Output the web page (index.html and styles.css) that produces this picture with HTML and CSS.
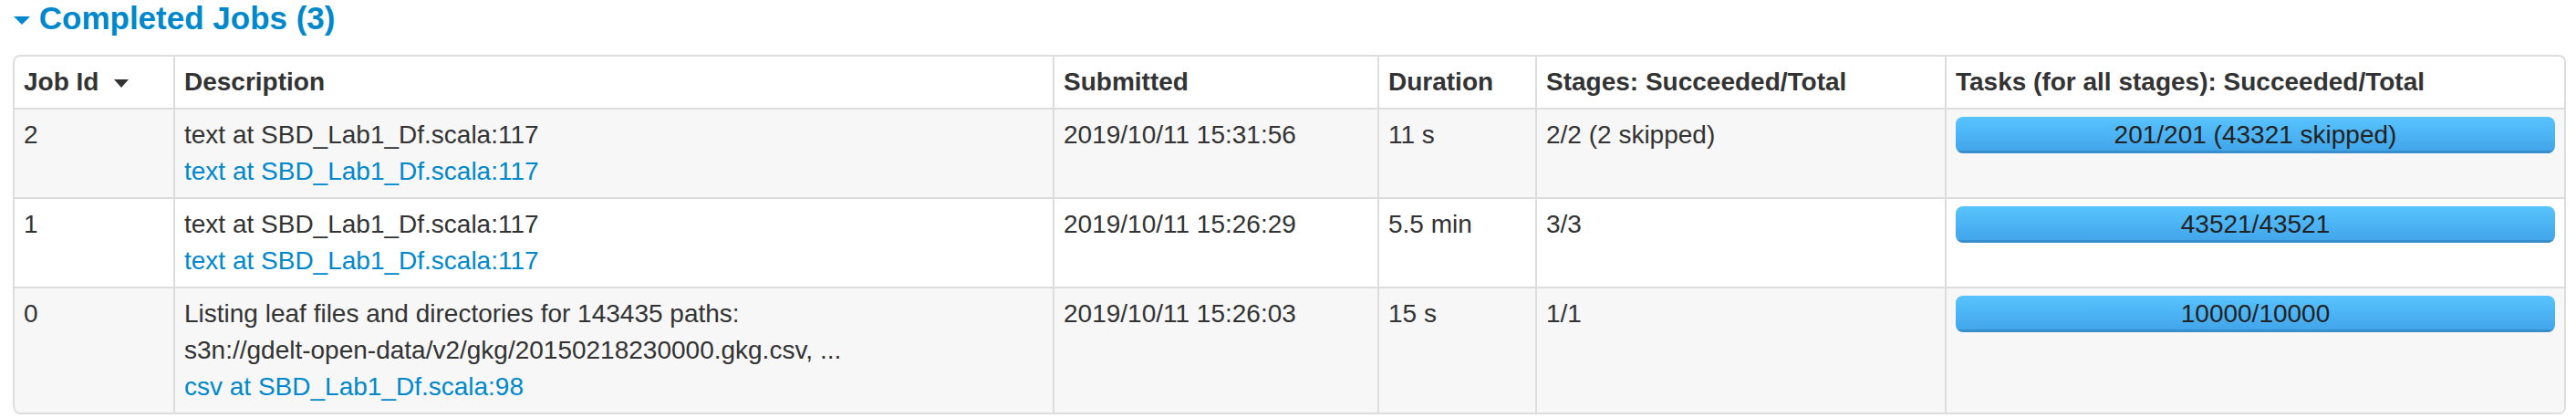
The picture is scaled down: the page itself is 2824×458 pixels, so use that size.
FILE: index.html
```html
<!DOCTYPE html>
<html>
<head>
<meta charset="utf-8">
<title>Completed Jobs</title>
<link rel="stylesheet" href="styles.css">
</head>
<body>
<div class="page">
  <h4 class="section-title"><span class="arrow-open"></span> <a class="title-link">Completed Jobs (3)</a></h4>
  <table class="jobs">
    <thead>
      <tr>
        <th class="c-id">Job Id<span class="sort-arrow"></span></th>
        <th class="c-desc">Description</th>
        <th class="c-sub">Submitted</th>
        <th class="c-dur">Duration</th>
        <th class="c-stages">Stages: Succeeded/Total</th>
        <th class="c-tasks">Tasks (for all stages): Succeeded/Total</th>
      </tr>
    </thead>
    <tbody>
      <tr class="odd">
        <td>2</td>
        <td><span class="desc">text at SBD_Lab1_Df.scala:117</span><a class="name-link">text at SBD_Lab1_Df.scala:117</a></td>
        <td>2019/10/11 15:31:56</td>
        <td>11 s</td>
        <td>2/2 (2 skipped)</td>
        <td><div class="progress"><div class="bar"></div><span class="progress-label">201/201 (43321 skipped)</span></div></td>
      </tr>
      <tr>
        <td>1</td>
        <td><span class="desc">text at SBD_Lab1_Df.scala:117</span><a class="name-link">text at SBD_Lab1_Df.scala:117</a></td>
        <td>2019/10/11 15:26:29</td>
        <td>5.5 min</td>
        <td>3/3</td>
        <td><div class="progress"><div class="bar"></div><span class="progress-label">43521/43521</span></div></td>
      </tr>
      <tr class="odd last">
        <td>0</td>
        <td><span class="desc">Listing leaf files and directories for 143435 paths:<br>s3n://gdelt-open-data/v2/gkg/20150218230000.gkg.csv, ...</span><a class="name-link">csv at SBD_Lab1_Df.scala:98</a></td>
        <td>2019/10/11 15:26:03</td>
        <td>15 s</td>
        <td>1/1</td>
        <td><div class="progress"><div class="bar"></div><span class="progress-label">10000/10000</span></div></td>
      </tr>
    </tbody>
  </table>
</div>
</body>
</html>
```
FILE: styles.css
```css
html, body {
  margin: 0;
  padding: 0;
  background: #fff;
}

body {
  font-family: "Liberation Sans", Arial, Helvetica, sans-serif;
  font-size: 28px;
  line-height: 40px;
  color: #333;
}

.page {
  padding: 0 11px 0 14px;
}

.section-title {
  margin: 0 0 20px 0;
  padding-left: 1px;
  font-size: 35px;
  line-height: 40px;
  font-weight: bold;
  color: #0088cc;
}

.arrow-open {
  display: inline-block;
  width: 0;
  height: 0;
  border-left: 9px solid transparent;
  border-right: 9px solid transparent;
  border-top: 9px solid #0088cc;
  margin-bottom: 5px;
}

.title-link {
  color: #0088cc;
  text-decoration: none;
}

.jobs {
  width: 100%;
  table-layout: fixed;
  border-collapse: separate;
  border-spacing: 0;
  border: 2px solid #ddd;
  border-left: 0;
  border-radius: 8px;
}

.jobs th,
.jobs td {
  box-sizing: border-box;
  padding: 8px 10px;
  text-align: left;
  vertical-align: top;
  border-left: 2px solid #ddd;
  border-top: 2px solid #ddd;
}

.jobs thead th {
  border-top: 0;
  font-weight: bold;
  color: #333;
}

.jobs thead th:first-child {
  border-top-left-radius: 8px;
}

.jobs thead th:last-child {
  border-top-right-radius: 8px;
}

.jobs tr.last td:first-child {
  border-bottom-left-radius: 8px;
}

.jobs tr.last td:last-child {
  border-bottom-right-radius: 8px;
}

.c-id { width: 176px; }
.c-desc { width: 964px; }
.c-sub { width: 356px; }
.c-dur { width: 173px; }
.c-stages { width: 449px; }

.sort-arrow {
  display: inline-block;
  width: 0;
  height: 0;
  margin-left: 17px;
  margin-bottom: 3px;
  border-left: 8px solid transparent;
  border-right: 8px solid transparent;
  border-top: 9px solid #333;
}

.jobs tr.odd td {
  background-color: #f7f7f7;
}

.desc {
  display: block;
}

.name-link {
  display: block;
  color: #0088cc;
  text-decoration: none;
}

.progress {
  position: relative;
  height: 40px;
  border-radius: 8px;
  overflow: hidden;
  background: #f5f5f5;
}

.bar {
  height: 100%;
  width: 100%;
  background-image: linear-gradient(to bottom, #58c4fe, #40a3e9);
  box-shadow: inset 0 -3px 0 rgba(0, 0, 0, 0.13);
}

.progress-label {
  position: absolute;
  left: 0;
  right: 0;
  top: 0;
  text-align: center;
  line-height: 40px;
  color: #222;
}
```
